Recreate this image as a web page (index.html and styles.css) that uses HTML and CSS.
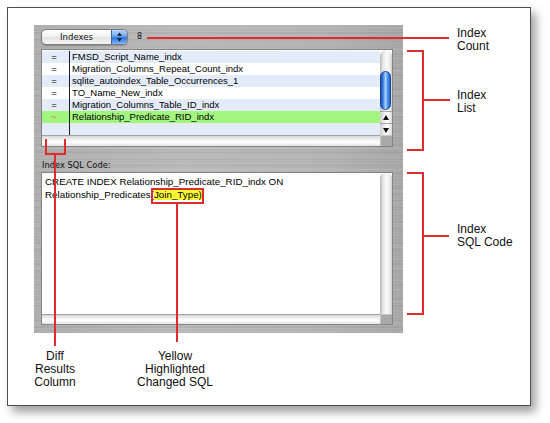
FILE: index.html
```html
<!DOCTYPE html>
<html>
<head>
<meta charset="utf-8">
<link rel="stylesheet" href="styles.css">
</head>
<body>
<div class="page">
  <div class="frame">
    <div class="metal">
      <div class="toolbar">
        <div class="popup">
          <span class="popup-label">Indexes</span>
          <span class="popup-arrows">
            <svg width="15" height="14" viewBox="0 0 15 14"><path d="M7.5 2.5 L10 5.8 L5 5.8 Z" fill="#151a2c"/><path d="M7.5 11.5 L10 8.2 L5 8.2 Z" fill="#151a2c"/></svg>
          </span>
        </div>
        <span class="count">8</span>
      </div>
      <div class="list">
        <div class="rows">
          <div class="row alt"><span class="diff">=</span><span class="name">FMSD_Script_Name_indx</span></div>
          <div class="row"><span class="diff">=</span><span class="name">Migration_Columns_Repeat_Count_indx</span></div>
          <div class="row alt"><span class="diff">=</span><span class="name">sqlite_autoindex_Table_Occurrences_1</span></div>
          <div class="row"><span class="diff">=</span><span class="name">TO_Name_New_indx</span></div>
          <div class="row alt"><span class="diff">=</span><span class="name">Migration_Columns_Table_ID_indx</span></div>
          <div class="row changed"><span class="diff tilde">~</span><span class="name">Relationship_Predicate_RID_indx</span></div>
          <div class="row alt"><span class="diff"></span><span class="name"></span></div>
        </div>
        <div class="vscroll">
          <div class="vtrack"><div class="thumb"></div></div>
          <div class="arrow"><svg width="12" height="12" viewBox="0 0 12 12"><path d="M6 3 L9 8 L3 8 Z" fill="#111"/></svg></div>
          <div class="arrow"><svg width="12" height="12" viewBox="0 0 12 12"><path d="M6 9 L9 4 L3 4 Z" fill="#111"/></svg></div>
        </div>
        <div class="htrack"></div>
        <div class="corner"></div>
      </div>
      <div class="sql-label">Index SQL Code:</div>
      <div class="sqlbox">
        <div class="sqltext">CREATE INDEX Relationship_Predicate_RID_indx ON<br>Relationship_Predicates(<span class="hl">Join_Type)</span></div>
        <div class="vtrack plain"></div>
        <div class="htrack"></div>
        <div class="corner"></div>
      </div>
    </div>
  </div>

  <div class="note note-count">Index<br>Count</div>
  <div class="note note-list">Index<br>List</div>
  <div class="note note-sql">Index<br>SQL Code</div>
  <div class="note note-diff">Diff<br>Results<br>Column</div>
  <div class="note note-yellow">Yellow<br>Highlighted<br>Changed SQL</div>

  <div class="red line-count"></div>
  <div class="red bracket br-list"></div>
  <div class="red stub stub-list"></div>
  <div class="red bracket br-sql"></div>
  <div class="red stub stub-sql"></div>
  <div class="red ubracket br-diff"></div>
  <div class="red stem stem-diff"></div>
  <div class="red hlbox"></div>
  <div class="red stem stem-yellow"></div>
</div>
</body>
</html>
```
FILE: styles.css
```css
html, body {
  margin: 0;
  padding: 0;
  background: #ffffff;
}
.page {
  position: relative;
  width: 550px;
  height: 423px;
  overflow: hidden;
  font-family: "Liberation Sans", Arial, sans-serif;
}
.frame {
  margin: 7px 0 0 7px;
  width: 524px;
  height: 399px;
  box-sizing: border-box;
  border: 1px solid #4d4d4d;
  background: #ffffff;
  box-shadow: 5px 6px 9px rgba(0, 0, 0, 0.38);
  padding: 17px 0 0 26px;
}
.metal {
  width: 369px;
  height: 308px;
  box-sizing: border-box;
  padding: 4px 10px 0 7px;
  background:
    repeating-linear-gradient(to bottom, rgba(255,255,255,0.07) 0, rgba(255,255,255,0.07) 1px, transparent 1px, transparent 3px),
    repeating-linear-gradient(to bottom, rgba(0,0,0,0.035) 0, rgba(0,0,0,0.035) 2px, transparent 2px, transparent 7px),
    repeating-linear-gradient(to bottom, rgba(255,255,255,0.05) 0, rgba(255,255,255,0.05) 3px, transparent 3px, transparent 11px),
    linear-gradient(to right, #adadad, #b8b8b8 40%, #b2b2b2 80%, #a6a6a6);
}
.toolbar {
  height: 20px;
  display: flex;
  align-items: flex-start;
}
.popup {
  width: 87px;
  height: 16px;
  box-sizing: border-box;
  border: 1px solid #7c7c7c;
  border-radius: 5px;
  background: linear-gradient(to bottom, #ffffff, #f1f1f1 50%, #e2e2e2 51%, #f4f4f4);
  display: flex;
  overflow: hidden;
  box-shadow: 0 1px 1px rgba(0,0,0,0.2);
}
.popup-label {
  flex: 1;
  text-align: center;
  font-family: "DejaVu Sans", sans-serif;
  font-size: 8.5px;
  line-height: 14px;
  color: #111;
}
.popup-arrows {
  width: 15px;
  height: 14px;
  border-left: 1px solid #3d64a8;
  background: linear-gradient(to bottom, #b8d6fc, #6ea6f2 45%, #2f72dc 55%, #7cb8fa);
  border-radius: 0 4px 4px 0;
  display: flex;
}
.count {
  margin-left: 9px;
  font-family: "DejaVu Sans", sans-serif;
  font-size: 8px;
  line-height: 16px;
  color: #111;
}
.list {
  height: 98px;
  box-sizing: border-box;
  border: 1px solid #848484;
  background: #ffffff;
  display: grid;
  grid-template-columns: 1fr 12px;
  grid-template-rows: 85px 11px;
}
.rows {
  padding-top: 1px;
  background: #ffffff;
}
.row {
  display: grid;
  grid-template-columns: 27px 1fr;
  height: 12px;
  line-height: 12px;
  font-size: 9.5px;
  color: #000;
  background: #ffffff;
}
.row.alt { background: #e4ecfa; }
.row.changed { background: #a2f57f; }
.diff {
  text-align: center;
  padding-right: 3px;
  font-size: 9.5px;
}
.tilde { color: #f08a1c; font-weight: bold; }
.name {
  border-left: 1px solid #1f1f1f;
  padding-left: 2px;
  white-space: nowrap;
  overflow: hidden;
}
.vscroll {
  display: flex;
  flex-direction: column;
}
.vtrack {
  height: 61px;
  box-sizing: border-box;
  background: linear-gradient(to right, #b9b9b9, #e6e6e6 25%, #fbfbfb 55%, #e9e9e9 85%, #cfcfcf);
  border-radius: 6px 6px 0 0;
  padding-top: 21px;
}
.vtrack.plain {
  height: auto;
  border-radius: 5px 5px 0 0;
  padding: 0;
}
.thumb {
  width: 11px;
  height: 39px;
  margin-left: 0;
  border-radius: 6px;
  box-sizing: border-box;
  border: 1px solid #1a4696;
  background: linear-gradient(to right, #1a50bb, #3f82e6 25%, #a9d2ff 50%, #4a8ef0 75%, #2360c8);
}
.arrow {
  height: 12px;
  box-sizing: border-box;
  border-top: 1px solid #a5a5a5;
  background: linear-gradient(to right, #cfcfcf, #f2f2f2 40%, #ffffff 60%, #dcdcdc);
  display: flex;
}
.htrack {
  border-top: 1px solid #a2a2a2;
  background: linear-gradient(to bottom, #d6d6d6, #f3f3f3 40%, #ffffff 60%, #e3e3e3);
}
.corner {
  background: #a9a9a9;
  border-top: 1px solid #c6c6c6;
  border-left: 1px solid #c6c6c6;
}
.sql-label {
  height: 25px;
  box-sizing: border-box;
  padding: 12px 0 0 1px;
  line-height: 12px;
  font-family: "DejaVu Sans", sans-serif;
  font-size: 8.3px;
  color: #111;
}
.sqlbox {
  height: 153px;
  box-sizing: border-box;
  border: 1px solid #848484;
  background: #ffffff;
  display: grid;
  grid-template-columns: 1fr 12px;
  grid-template-rows: 1fr 10px;
}
.sqltext {
  padding: 2px 0 0 3px;
  font-size: 9.8px;
  line-height: 13px;
  color: #000;
  white-space: nowrap;
}
.hl { background: #fbfb33; }
.note {
  position: absolute;
  font-size: 12px;
  line-height: 13px;
  color: #111;
}
.note-count { left: 457px; top: 27px; }
.note-list { left: 457px; top: 89px; }
.note-sql { left: 457px; top: 223px; }
.note-diff { left: 15px; top: 350px; width: 80px; text-align: center; }
.note-yellow { left: 125px; top: 350px; width: 100px; text-align: center; }
.red {
  position: absolute;
  box-sizing: border-box;
}
.line-count { left: 147px; top: 37px; width: 302px; height: 2px; background: #de2b2b; }
.bracket {
  border: 2px solid #de2b2b;
  border-left: none;
}
.br-list { left: 407px; top: 50px; width: 17px; height: 101px; }
.br-sql { left: 407px; top: 172px; width: 17px; height: 143px; }
.stub { height: 2px; background: #de2b2b; }
.stub-list { left: 423px; top: 99px; width: 27px; }
.stub-sql { left: 423px; top: 235px; width: 26px; }
.ubracket {
  border: 2px solid #de2b2b;
  border-top: none;
}
.br-diff { left: 45px; top: 139px; width: 21px; height: 16px; }
.stem { width: 2px; background: #de2b2b; }
.stem-diff { left: 54px; top: 154px; height: 192px; }
.hlbox { left: 151px; top: 188px; width: 53px; height: 16px; border: 2px solid #de2b2b; }
.stem-yellow { left: 176px; top: 203px; height: 139px; }
```
